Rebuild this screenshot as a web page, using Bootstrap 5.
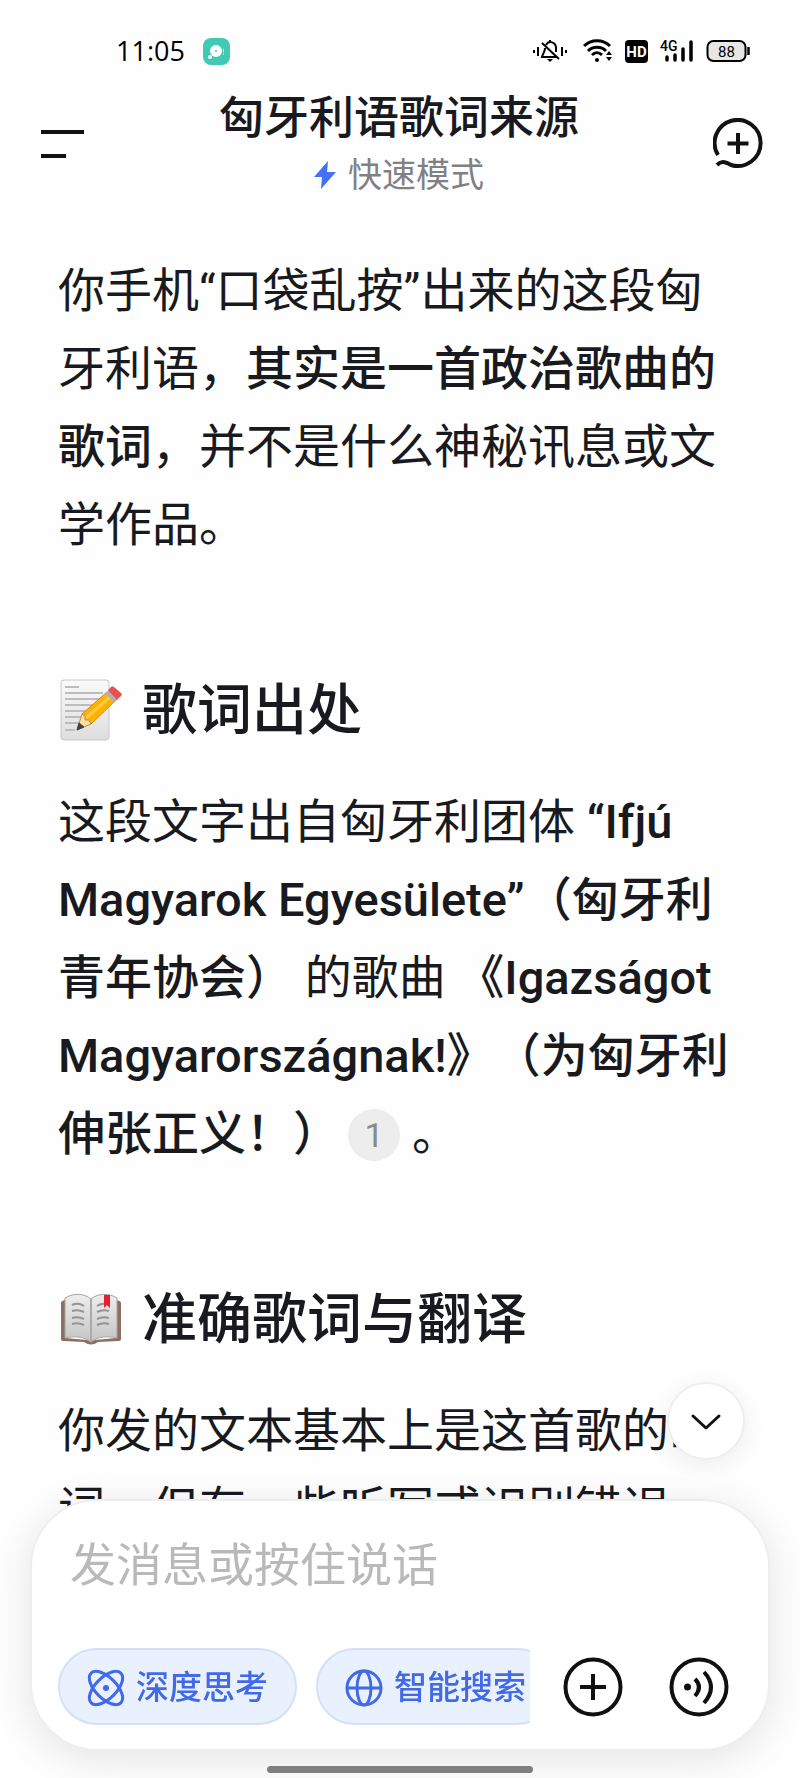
<!DOCTYPE html>
<html lang="zh-CN">
<head>
<meta charset="utf-8">
<meta name="viewport" content="width=device-width, initial-scale=1">
<title>匈牙利语歌词来源</title>
<link href="https://cdn.jsdelivr.net/npm/bootstrap@5.3.0/dist/css/bootstrap.min.css" rel="stylesheet">
<style>
  body { font-family: Roboto, "Noto Sans CJK SC", sans-serif; color: #181a20; background: #fefefe; text-spacing-trim: space-all; }
  svg { display: block; flex: none; }
  .status { padding: 36px 48px 0 116px; height: 66px; color: #000; }
  .clock { font: 400 27px/30px "Open Sans", sans-serif; margin-right: 18px; }
  .status-icons { gap: 12px; }
  .topbar { padding: 24px 37px 0 41px; height: 124px; }
  .topbar h1 { font-size: 45px; line-height: 58px; font-weight: 500; }
  .mode { font-size: 34px; line-height: 54px; color: #808184; gap: 12px; }
  .plain { background: none; border: 0; padding: 0; color: #101214; }
  .answer { padding: 62px 58px 0; }
  .answer p { font-size: 47px; line-height: 78px; margin: 0; }
  .answer strong { font-weight: 500; }
  .answer h2 { font-size: 55px; line-height: 78px; font-weight: 500; margin: 107px 0 34px; gap: 20px; }
  .cite { width: 52px; height: 52px; border-radius: 50%; background: #ededed; color: #8a8a8a; font-size: 34px; line-height: 52px; font-weight: 400; text-align: center; text-decoration: none; vertical-align: middle; display: inline-block; margin: 0 12px 6px 8px; }
  .dock { padding: 0 30px; }
  .composer { background: #fff; border: 2px solid #eee; border-radius: 68px; padding: 34px 39px 24px 26px; box-shadow: 0 8px 40px rgba(0,0,0,.11); }
  .composer input { font-size: 46px; line-height: 60px; height: 60px; padding: 0 12px; border: 0; outline: 0; background: none; width: 100%; }
  .composer input::placeholder { color: #b9b9b9; opacity: 1; }
  .tools { margin-top: 53px; }
  .chips { gap: 19px; min-width: 0; flex: 1 1 0; overflow: hidden; margin-right: 33px; }
  .chip { flex: none; height: 77px; border: 2px solid #d3e0fa; border-radius: 39px; background: #eaf1fe; color: #4169e8; font-size: 33px; font-weight: 500; padding: 2px 27px 0; gap: 11px; }
  .round-tools { gap: 46px; }
  .down { width: 78px; height: 78px; border: 2px solid #eee; background: #fff; border-radius: 50%; margin: 0 25px 39px 0; box-shadow: 0 6px 24px rgba(0,0,0,.07); }
  .home { width: 36%; height: 7px; border-radius: 4px; background: #7f7f7f; margin: 15px auto 5px; }
</style>
</head>
<body>
<div class="vh-100 overflow-hidden d-flex flex-column">
  <div class="status d-flex align-items-center flex-shrink-0">
    <span class="clock">11:05</span>
    <svg width="27" height="27" viewBox="0 0 27 27"><rect width="27" height="27" rx="8" fill="#41c9b5"/><circle cx="13" cy="13" r="6" fill="#fff"/><circle cx="13" cy="13" r="1" fill="#41c9b5"/><circle cx="7" cy="19" r="2" fill="#fff"/><path d="M20.5 11v3M20.500 15.500v1" stroke="#fff"/></svg>
    <div class="status-icons d-flex align-items-center ms-auto">
      <svg width="34" height="24" viewBox="0 0 34 24" fill="none" stroke="#000" stroke-width="2"><path d="M1 11v3M5 8v9M29 8v9M33 11v3M13 6c3-5 10-3 10 3v4M12 9c0 4-2 5-3 9h14M9 4l17 16M17 1v2"/><path d="M14 20h6l-3 3z" fill="#000" stroke="none"/></svg>
      <svg class="ms-1" width="30" height="24" viewBox="0 0 30 24" fill="none" stroke="#000" stroke-width="3"><path d="M1 7c7-7 19-7 26 0M5 12c5-5 13-5 18 0M9 16c3-3 7-3 10 0"/><circle cx="14" cy="21" r="2" fill="#000" stroke="none"/><path d="M23 16l3-4 3 4zM23 18l3 4 3-4z" fill="#000" stroke="none"/></svg>
      <svg width="23" height="23" viewBox="0 0 23 23"><rect width="23" height="23" rx="4"/><text x="11.500" y="17" font-size="15" font-weight="700" fill="#fff" text-anchor="middle" font-family="Roboto">HD</text></svg>
      <svg width="34" height="24" viewBox="0 0 34 24"><text x="0" y="12" font-size="14" font-weight="500" font-family="Roboto">4G</text><path d="M7 18v3M15 16v5M23 10v11M31 3v18" stroke="#000" stroke-width="3.500" stroke-linecap="round"/></svg>
      <svg width="46" height="24" viewBox="0 0 46 24"><rect x="1.500" y="2" width="38" height="20" rx="6" fill="#e6e6e6" stroke="#000" stroke-width="2"/><path d="M42.500 8v8" stroke="#000" stroke-width="2.500"/><text x="20.500" y="17.500" font-size="15" text-anchor="middle" font-family="Roboto">88</text></svg>
    </div>
  </div>

  <header class="topbar d-flex justify-content-between flex-shrink-0">
    <button class="plain align-self-center mt-2" type="button" aria-label="菜单">
      <svg width="44" height="50" viewBox="0 0 44 50"><path d="M0 13h43M0 37h25" stroke="#101214" stroke-width="4"/></svg>
    </button>
    <div class="text-center">
      <h1 class="m-0">匈牙利语歌词来源</h1>
      <div class="mode d-flex justify-content-center align-items-center">
        <svg width="22" height="28" viewBox="0 0 22 28"><path d="M14 0L0 16h8L7 28 22 11h-9z" fill="#4470f8"/></svg>
        <span>快速模式</span>
      </div>
    </div>
    <button class="plain align-self-center mt-2" type="button" aria-label="新对话">
      <svg width="50" height="52" viewBox="0 0 50 52" fill="none" stroke="#101214" stroke-width="4"><path d="M5 37A23 23 0 1 1 18 47C11 43 8 43 4 47"/><path d="M25 15v21M14.500 25.500h21"/></svg>
    </button>
  </header>

  <main class="answer flex-grow-1 overflow-hidden">
    <p>你手机“口袋乱按”出来的这段匈牙利语，<strong>其实是一首政治歌曲的歌词</strong>，并不是什么神秘讯息或文学作品。</p>

    <h2 class="d-flex align-items-center">
      <svg width="64" height="64" viewBox="0 0 64 64"><defs><linearGradient id="sheet" x2="0" y2="1"><stop stop-color="#fafafa"/><stop offset="1" stop-color="#dedede"/></linearGradient></defs><rect x="3" y="2" width="48" height="60" rx="3" fill="url(#sheet)" stroke="#c8c8c8"/><path d="M7 9h14M7 15h38M7 21h38M7 27h38M7 33h38M7 39h30M7 45h18M7 52h10" stroke="#bdbdbd" stroke-width="2"/><path d="M24 36L49 14 57 23 33 46z" fill="#ffb300" stroke="#e08a00"/><path d="M28 40L53 18" stroke="#ffca45" stroke-width="3"/><path d="M24 36L19 52 33 46 31 42 27 42 27 38z" fill="#ffe0a0" stroke="#b98d48"/><path d="M21 45L19 52 26 49z" fill="#424242" stroke="#424242"/><path d="M47 15l4-3 9 9-4 4z" fill="#b0b0b0"/><path d="M50 12l3-3c1-1 2-1 3 0l7 6c1 1 1 2 0 3l-4 4z" fill="#e9504e"/></svg>
      <span>歌词出处</span>
    </h2>
    <p>这段文字出自匈牙利团体 <strong>“Ifjú Magyarok Egyesülete”（匈牙利青年协会）</strong> 的歌曲 <strong>《Igazságot Magyarországnak!》（为匈牙利伸张正义！）</strong><a class="cite" href="#">1</a>。</p>

    <h2 class="d-flex align-items-center">
      <svg width="64" height="64" viewBox="0 0 64 64"><defs><linearGradient id="leaf" x2="0" y2="1"><stop stop-color="#eeeeee"/><stop offset="1" stop-color="#c4c4c4"/></linearGradient></defs><path d="M3 16q0-2 4-3v38l22 2q4 2 8 0l21-2V13q5 1 5 3v36q0 2-3 2l-20 1q-7 5-14 0l-20-1q-3 0-3-2z" fill="#8d6e63"/><path d="M7 11c8-5 19-5 26 1v43c-8-6-17-6-26-4z" fill="url(#leaf)" stroke="#a5a5a5"/><path d="M59 11c-8-5-19-5-26 1v43c8-6 17-6 26-4z" fill="url(#leaf)" stroke="#a5a5a5"/><path d="M33 12v43" stroke="#aaa" stroke-width="2"/><path d="M14 18q6-3 12 1M14 24q6-2 12 1M14 31q6-2 12 1M14 37q6-2 12 1M39 19q6-4 12-1M39 25q6-3 12-1M39 32q6-3 12-1M39 38q6-3 12-1" fill="none" stroke="#949494" stroke-width="2"/><path d="M46 8h6v13l-3-3-3 3z" fill="#e91d2d"/></svg>
      <span>准确歌词与翻译</span>
    </h2>
    <p>你发的文本基本上是这首歌的歌词，但有一些听写或识别错误</p>
  </main>
</div>

<footer class="dock fixed-bottom">
  <button class="down d-flex align-items-center justify-content-center ms-auto p-0" type="button" aria-label="滚动到底部">
    <svg width="32" height="20" viewBox="0 0 32 20" fill="none" stroke="#101214" stroke-width="3" stroke-linecap="round" stroke-linejoin="round"><path d="M3 5l13 12L29 5"/></svg>
  </button>
  <form class="composer">
    <input type="text" aria-label="消息" placeholder="发消息或按住说话">
    <div class="tools d-flex align-items-center">
      <div class="chips d-flex">
        <button class="chip d-flex align-items-center" type="button">
          <svg width="38" height="38" viewBox="0 0 38 38" fill="none" stroke="#4169e8" stroke-width="3"><ellipse cx="19" cy="19" rx="21" ry="10.500" transform="rotate(45 19 19)"/><ellipse cx="19" cy="19" rx="21" ry="10.500" transform="rotate(-45 19 19)"/><circle cx="19" cy="19" r="3" fill="#4169e8" stroke="none"/></svg>
          <span>深度思考</span>
        </button>
        <button class="chip d-flex align-items-center" type="button">
          <svg width="38" height="38" viewBox="0 0 38 38" fill="none" stroke="#4169e8" stroke-width="3"><circle cx="19" cy="19" r="17"/><ellipse cx="19" cy="19" rx="7" ry="17"/><path d="M2 19h34"/></svg>
          <span>智能搜索</span>
        </button>
      </div>
      <div class="round-tools d-flex">
        <button class="plain" type="button" aria-label="添加">
          <svg width="60" height="60" viewBox="0 0 60 60" fill="none" stroke="#101010" stroke-width="4"><circle cx="30" cy="30" r="27.500"/><path d="M30 17v26M17 30h26"/></svg>
        </button>
        <button class="plain" type="button" aria-label="语音通话">
          <svg width="60" height="60" viewBox="0 0 60 60" fill="none" stroke="#101010" stroke-width="4"><circle cx="30" cy="30" r="27.500"/><circle cx="18.500" cy="30" r="3.500" fill="#101010" stroke="none"/><path d="M26 22q8 8 0 17M35 15q14 15 0 31"/></svg>
        </button>
      </div>
    </div>
  </form>
  <div class="home"></div>
</footer>
<script src="https://cdn.jsdelivr.net/npm/bootstrap@5.3.0/dist/js/bootstrap.bundle.min.js"></script>
</body>
</html>
